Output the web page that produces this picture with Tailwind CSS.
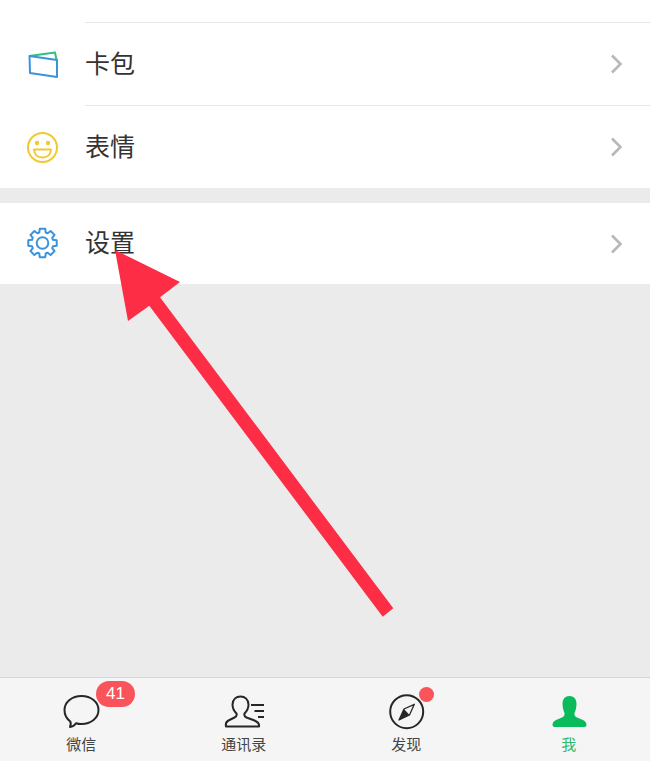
<!doctype html>
<html>
<head>
<meta charset="utf-8">
<script src="https://cdn.jsdelivr.net/npm/@tailwindcss/browser@4"></script>
</head>
<body class="m-0">
<div class="relative w-[650px] h-[761px] overflow-hidden bg-[#ebebeb] flex flex-col font-['Liberation_Sans','Noto_Sans_CJK_SC',sans-serif]">
  <div class="h-[188px] bg-white flex flex-col pl-[85px] shrink-0">
    <div class="h-[23px] border-b border-[#e6e6e6]"></div>
    <div class="relative h-[83px] flex items-center justify-between border-b border-[#e6e6e6] pr-[26px]">
      <svg class="absolute left-[-85px] top-0" width="85" height="82" viewBox="0 0 85 82" fill="none">
        <path d="M29.5 33 L55 29.5 L56.5 37" stroke="#2fc27c" stroke-width="2" stroke-linejoin="round"/>
        <path d="M29.5 33 L57 37 L57 54 L30 50 Z" stroke="#3a93dc" stroke-width="2" stroke-linejoin="round"/>
      </svg>
      <span class="text-[25px] leading-none text-[#333]">卡包</span>
      <svg width="16" height="24" viewBox="0 0 16 24" fill="none"><path d="M4 3.5 L12.5 12 L4 20.5" stroke="#b8b8b8" stroke-width="2.6"/></svg>
    </div>
    <div class="relative h-[82px] flex items-center justify-between pr-[26px]">
      <svg class="absolute left-[-85px] top-0" width="85" height="82" viewBox="0 0 85 82" fill="none">
        <circle cx="42.5" cy="41.5" r="14.5" stroke="#f2c832" stroke-width="2"/>
        <circle cx="37" cy="37" r="2.2" fill="#f2c832"/>
        <circle cx="48" cy="37" r="2.2" fill="#f2c832"/>
        <path d="M34 43.5 H51 C50.5 49 47 51.5 42.5 51.5 C38 51.5 34.5 49 34 43.5 Z" stroke="#f2c832" stroke-width="2" stroke-linejoin="round"/>
      </svg>
      <span class="text-[25px] leading-none text-[#333]">表情</span>
      <svg width="16" height="24" viewBox="0 0 16 24" fill="none"><path d="M4 3.5 L12.5 12 L4 20.5" stroke="#b8b8b8" stroke-width="2.6"/></svg>
    </div>
  </div>
  <div class="h-[15px] shrink-0"></div>
  <div class="relative h-[81px] bg-white flex items-center justify-between pl-[85px] pr-[26px] shrink-0">
    <svg class="absolute left-0 top-0" width="85" height="81" viewBox="0 0 85 81" fill="none">
      <path d="M39.73 25.77 L45.27 25.77 L45.7 29.5 L47.66 30.29 L50.61 27.98 L54.52 31.89 L52.21 34.84 L53 36.8 L56.73 37.23 L56.73 42.77 L53 43.2 L52.21 45.16 L54.52 48.11 L50.61 52.02 L47.66 49.71 L45.7 50.5 L45.27 54.23 L39.73 54.23 L39.3 50.5 L37.34 49.71 L34.39 52.02 L30.48 48.11 L32.79 45.16 L32 43.2 L28.27 42.77 L28.27 37.23 L32 36.8 L32.79 34.84 L30.48 31.89 L34.39 27.98 L37.34 30.29 L39.3 29.5 Z" stroke="#3a93dc" stroke-width="2" stroke-linejoin="round"/>
      <circle cx="42.5" cy="40" r="5.8" stroke="#3a93dc" stroke-width="2"/>
    </svg>
    <span class="text-[25px] leading-none text-[#333]">设置</span>
    <svg width="16" height="24" viewBox="0 0 16 24" fill="none"><path d="M4 3.5 L12.5 12 L4 20.5" stroke="#b8b8b8" stroke-width="2.6"/></svg>
  </div>
  <div class="flex-1"></div>
  <div class="h-[84px] shrink-0 bg-[#f5f5f5] border-t border-[#d6d6d6] grid grid-cols-4">
    <div class="relative flex flex-col items-center justify-end pb-[6px]">
      <svg class="absolute left-0 top-0" width="162" height="60" viewBox="0 0 162 60" fill="none">
        <path d="M70 49 C71 46.5 71 44.5 70 43.2 C66.5 40.5 64.5 36.5 64.5 32 C64.5 24 72 18 81.5 18 C91 18 98.5 24 98.5 32 C98.5 40 91 46 81.5 46 C79.5 46 77.5 45.7 76 45.2 C74.5 47.5 72.5 48.8 70 49 Z" stroke="#262626" stroke-width="2" stroke-linejoin="round"/>
      </svg>
      <div class="absolute left-[96px] top-[3px] w-[39px] h-[26px] rounded-full bg-[#f8545a] text-white text-[17px] leading-[26px] text-center">41</div>
      <span class="text-[15px] leading-[20px] text-[#444]">微信</span>
    </div>
    <div class="relative flex flex-col items-center justify-end pb-[6px]">
      <svg class="absolute left-0 top-0" width="162" height="60" viewBox="0 0 162 60" fill="none">
        <path d="M63 48.5 H96 C96.5 46 95 44 91.5 42.5 L83.5 39.5 C81.5 38.5 81 37 81.5 35.5 C84 33 85.5 29.5 85.5 26.5 C85.5 21.5 82 18.5 77.5 18.5 C73 18.5 69.5 21.5 69.5 26.5 C69.5 29.5 71 33 73.5 35.5 C74 37 73.5 38.5 71.5 39.5 L65.5 42.5 C63.5 43.5 62.5 46 63 48.5 Z" stroke="#262626" stroke-width="2" stroke-linejoin="round"/>
        <path d="M88 27 H101 M91.5 33 H101 M95 39 H101" stroke="#262626" stroke-width="2"/>
      </svg>
      <span class="text-[15px] leading-[20px] text-[#444]">通讯录</span>
    </div>
    <div class="relative flex flex-col items-center justify-end pb-[6px]">
      <svg class="absolute left-0 top-0" width="163" height="60" viewBox="0 0 163 60" fill="none">
        <circle cx="81.7" cy="33.7" r="16.5" stroke="#262626" stroke-width="2"/>
        <path d="M89.3 26.3 L84.5 37 L74 42 L79 31 Z" stroke="#262626" stroke-width="1.3" stroke-linejoin="round"/>
        <path d="M79 31 L84.5 37 L74 42 Z" fill="#262626"/>
      </svg>
      <div class="absolute left-[94px] top-[9px] w-[15px] h-[15px] rounded-full bg-[#f8545a]"></div>
      <span class="text-[15px] leading-[20px] text-[#444]">发现</span>
    </div>
    <div class="relative flex flex-col items-center justify-end pb-[6px]">
      <svg class="absolute left-0 top-0" width="162" height="60" viewBox="0 0 162 60" fill="none">
        <path d="M81.5 18 C85.8 18 88.5 21 88.5 25.5 C88.5 29.5 87.5 33 86.5 35 C86.2 37 87 38.5 89 39.5 L95 42 C97.5 43 98.5 45 98.5 47 C98.5 48.3 97.5 49 96.5 49 H66.5 C65.5 49 64.5 48.3 64.5 47 C64.5 45 65.5 43 68 42 L74 39.5 C76 38.5 76.8 37 76.5 35 C75.5 33 74.5 29.5 74.5 25.5 C74.5 21 77.2 18 81.5 18 Z" fill="#09bb5b"/>
      </svg>
      <span class="text-[15px] leading-[20px] text-[#2eb872]">我</span>
    </div>
  </div>
  <svg class="absolute left-0 top-0 pointer-events-none" width="650" height="761" viewBox="0 0 650 761">
    <path d="M115 250 L180 282 L160 297.3 L393.3 608.3 L382.7 616.7 L149.3 305.7 L128 321 Z" fill="#fe2d46"/>
  </svg>
</div>
</body>
</html>
